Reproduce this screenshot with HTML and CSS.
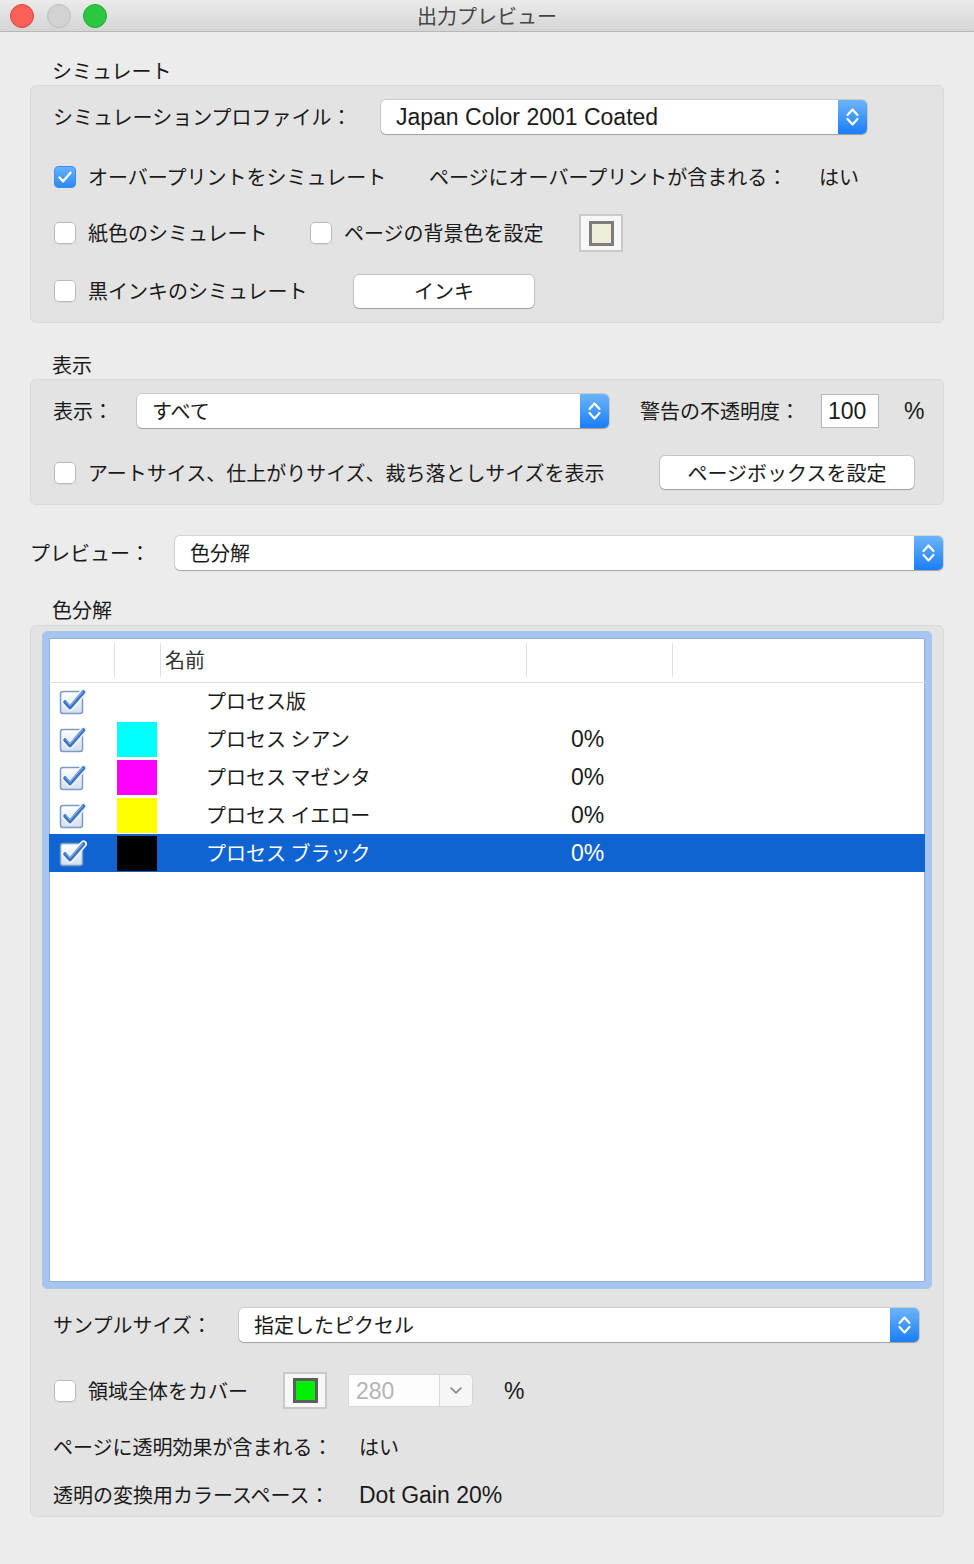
FILE: index.html
```html
<!DOCTYPE html>
<html lang="ja">
<head>
  <meta charset="UTF-8">
  <title>出力プレビュー</title>
  <link rel="stylesheet" href="styles.css">
</head>
<body>
  <svg class="defs" width="0" height="0">
    <defs>
      <linearGradient id="boxfill" x1="0" y1="0" x2="0" y2="1">
        <stop offset="0" stop-color="#ffffff"/>
        <stop offset="1" stop-color="#d3deee"/>
      </linearGradient>
      <symbol id="chev" viewBox="0 0 29 34">
        <path d="M9.5 15 L14.5 9.5 L19.5 15 M9.5 19 L14.5 24.5 L19.5 19" fill="none" stroke="#fff" stroke-width="2.2" stroke-linecap="round" stroke-linejoin="round"/>
      </symbol>
      <symbol id="tick" viewBox="0 0 28 28">
        <rect x="1.5" y="4.5" width="22" height="22" rx="2.5" fill="url(#boxfill)" stroke="#7e9bc4" stroke-width="1.5"/>
        <path d="M6 15 L11 20.5 L24.5 5" fill="none" stroke="#eef4fb" stroke-width="7" stroke-linecap="round" stroke-linejoin="round"/>
        <path d="M6 15 L11 20.5 L24.5 5" fill="none" stroke="#3d74c2" stroke-width="3.6" stroke-linecap="round" stroke-linejoin="round"/>
        <path d="M7 14.5 L11 18.8 L23.5 5" fill="none" stroke="#8fb6e8" stroke-width="1.1" stroke-linecap="round"/>
      </symbol>
      <symbol id="ok" viewBox="0 0 22 22">
        <path d="M5.5 11.5 L9.2 15.3 L16.5 6.8" fill="none" stroke="#fff" stroke-width="2.4" stroke-linecap="round" stroke-linejoin="round"/>
      </symbol>
    </defs>
  </svg>

  <div class="titlebar">
    <div class="lights">
      <span class="light red"></span>
      <span class="light off"></span>
      <span class="light green"></span>
    </div>
    <div class="title">出力プレビュー</div>
    <div></div>
  </div>

  <main class="content">
    <div class="group-title first">シミュレート</div>
    <section class="group sim">
      <div class="row r1">
        <span class="prof-label">シミュレーションプロファイル：</span>
        <div class="popup prof">
          <span class="value en">Japan Color 2001 Coated</span>
          <span class="arrows"><svg><use href="#chev"/></svg></span>
        </div>
      </div>
      <div class="row r2">
        <label class="check overprint"><span class="cb on"><svg><use href="#ok"/></svg></span>オーバープリントをシミュレート</label>
        <span class="op-label">ページにオーバープリントが含まれる：</span>
        <span>はい</span>
      </div>
      <div class="row r3">
        <label class="check paper"><span class="cb"></span>紙色のシミュレート</label>
        <label class="check bg"><span class="cb"></span>ページの背景色を設定</label>
        <span class="well"><span class="chip cream"></span></span>
      </div>
      <div class="row r4">
        <label class="check black"><span class="cb"></span>黒インキのシミュレート</label>
        <button class="btn ink">インキ</button>
      </div>
    </section>

    <div class="group-title">表示</div>
    <section class="group view">
      <div class="row r1">
        <span class="view-label">表示：</span>
        <div class="popup show">
          <span class="value">すべて</span>
          <span class="arrows"><svg><use href="#chev"/></svg></span>
        </div>
        <span class="warn-label">警告の不透明度：</span>
        <span class="field en">100</span>
        <span class="pct en">%</span>
      </div>
      <div class="row r2">
        <label class="check sizes"><span class="cb"></span>アートサイス、仕上がりサイズ、裁ち落としサイズを表示</label>
        <button class="btn pagebox">ページボックスを設定</button>
      </div>
    </section>

    <div class="row preview-row">
      <span class="preview-label">プレビュー：</span>
      <div class="popup preview">
        <span class="value">色分解</span>
        <span class="arrows"><svg><use href="#chev"/></svg></span>
      </div>
    </div>

    <div class="group-title sep-title">色分解</div>
    <section class="group sep">
      <div class="list">
        <table>
          <colgroup>
            <col class="w-chk"><col class="w-sw"><col class="w-name"><col class="w-pct"><col>
          </colgroup>
          <thead>
            <tr><th></th><th></th><th>名前</th><th></th><th></th></tr>
          </thead>
          <tbody>
            <tr>
              <td class="chk"><svg class="tick"><use href="#tick"/></svg></td>
              <td></td>
              <td class="name">プロセス版</td>
              <td></td><td></td>
            </tr>
            <tr>
              <td class="chk"><svg class="tick"><use href="#tick"/></svg></td>
              <td><span class="swatch cyan"></span></td>
              <td class="name">プロセス シアン</td>
              <td class="num en">0%</td><td></td>
            </tr>
            <tr>
              <td class="chk"><svg class="tick"><use href="#tick"/></svg></td>
              <td><span class="swatch magenta"></span></td>
              <td class="name">プロセス マゼンタ</td>
              <td class="num en">0%</td><td></td>
            </tr>
            <tr>
              <td class="chk"><svg class="tick"><use href="#tick"/></svg></td>
              <td><span class="swatch yellow"></span></td>
              <td class="name">プロセス イエロー</td>
              <td class="num en">0%</td><td></td>
            </tr>
            <tr class="sel">
              <td class="chk"><svg class="tick"><use href="#tick"/></svg></td>
              <td><span class="swatch black"></span></td>
              <td class="name">プロセス ブラック</td>
              <td class="num en">0%</td><td></td>
            </tr>
          </tbody>
        </table>
      </div>

      <div class="row sample-row">
        <span class="sample-label">サンプルサイズ：</span>
        <div class="popup sample">
          <span class="value">指定したピクセル</span>
          <span class="arrows"><svg><use href="#chev"/></svg></span>
        </div>
      </div>
      <div class="row cover-row">
        <label class="check cover"><span class="cb"></span>領域全体をカバー</label>
        <span class="well green-well"><span class="chip green"></span></span>
        <span class="combo">
          <span class="combo-text en">280</span>
          <span class="combo-drop">
            <svg viewBox="0 0 33 31"><path d="M11.5 13 L16.5 18 L21.5 13" fill="none" stroke="#8a8a8a" stroke-width="1.8" stroke-linecap="round" stroke-linejoin="round"/></svg>
          </span>
        </span>
        <span class="pct2 en">%</span>
      </div>
      <div class="row info-row">
        <span class="info-label">ページに透明効果が含まれる：</span>
        <span>はい</span>
      </div>
      <div class="row info-row last">
        <span class="info-label">透明の変換用カラースペース：</span>
        <span class="en">Dot Gain 20%</span>
      </div>
    </section>
  </main>
</body>
</html>
```

FILE: styles.css
```css
* {
  box-sizing: border-box;
}
body {
  margin: 0;
  width: 974px;
  height: 1564px;
  overflow: hidden;
  background: #ececec;
  color: #1a1a1a;
  font-family: "Noto Sans CJK JP", sans-serif;
  font-size: 20px;
  line-height: 24px;
}
.defs {
  display: block;
  width: 0;
  height: 0;
  overflow: hidden;
}
.en {
  font-family: "Liberation Sans", "Noto Sans CJK JP", sans-serif;
  font-size: 23px;
}

/* title bar */
.titlebar {
  height: 32px;
  display: grid;
  grid-template-columns: 1fr auto 1fr;
  align-items: center;
  background: linear-gradient(#ebebeb, #d5d5d5);
  border-bottom: 1px solid #b8b8b8;
}
.lights {
  display: flex;
  gap: 12.5px;
  padding-left: 10px;
}
.light {
  width: 24px;
  height: 24px;
  border-radius: 50%;
}
.light.red {
  background: #fc5f57;
  border: 1px solid #e0443e;
}
.light.off {
  background: #d2d2d2;
  border: 1px solid #bdbdbd;
}
.light.green {
  background: #2ac840;
  border: 1px solid #1eaa31;
}
.title {
  color: #444;
  font-size: 20px;
}

/* layout */
.content {
  padding: 0 30px;
}
.group-title {
  height: 24px;
  padding-left: 22px;
  margin-top: 30px;
  margin-bottom: 2px;
}
.group-title.first {
  margin-top: 27px;
}
.group-title.sep-title {
  margin-top: 28px;
  margin-bottom: 3px;
}
.group {
  background: #e3e3e3;
  border: 1px solid #d9d9d9;
  border-radius: 6px;
  padding: 14px 0 14px 22px;
}
.row {
  display: flex;
  align-items: center;
  white-space: nowrap;
}

/* simulate group */
.sim .r1 { height: 34px; }
.sim .r2 { height: 34px; margin-top: 26px; }
.sim .r3 { height: 38px; margin-top: 20px; }
.sim .r4 { height: 34px; margin-top: 22px; }
.prof-label { width: 328px; }
.popup.prof { width: 486px; }
.check.overprint { width: 376px; }
.op-label { width: 390px; }
.check.paper { width: 256px; }
.check.bg { width: 270px; }
.check.black { width: 301px; }
.btn.ink { width: 180px; }

/* view group */
.view { padding-bottom: 15px; }
.view .r1 { height: 34px; }
.view .r2 { height: 33px; margin-top: 28px; }
.view-label { width: 84px; }
.popup.show { width: 472px; }
.warn-label {
  width: 181px;
  margin-left: 31px;
}
.check.sizes { width: 607px; }
.btn.pagebox { width: 254px; }
.pct { margin-left: 25px; }

.preview-row {
  height: 34px;
  margin-top: 31px;
}
.preview-label { width: 145px; }
.popup.preview { width: 768px; }

/* controls */
.check {
  display: flex;
  align-items: center;
  gap: 12px;
  flex-shrink: 0;
}
.cb {
  width: 22px;
  height: 22px;
  margin-left: 1px;
  border-radius: 5px;
  background: #fff;
  box-shadow: inset 0 0 0 1px #bababa, 0 1px 1px rgba(0, 0, 0, 0.06);
  flex-shrink: 0;
}
.cb.on {
  background: linear-gradient(#6ab3fb, #2a88f6);
  box-shadow: inset 0 0 0 1px #3b8fe8;
}
.cb svg {
  display: block;
  width: 22px;
  height: 22px;
}
.popup {
  display: flex;
  height: 34px;
  background: #fff;
  border-radius: 5px;
  box-shadow: 0 0 0 1px rgba(0, 0, 0, 0.1), 0 1px 1px rgba(0, 0, 0, 0.22);
  overflow: hidden;
  flex-shrink: 0;
}
.popup .value {
  flex: 1;
  display: flex;
  align-items: center;
  padding-left: 15px;
}
.popup .arrows {
  width: 29px;
  background: linear-gradient(#6cb4fb, #1a7ef6);
}
.popup .arrows svg {
  display: block;
  width: 29px;
  height: 34px;
}
.btn {
  height: 33px;
  padding: 0;
  border: none;
  border-radius: 5px;
  background: #fff;
  box-shadow: 0 0 0 1px rgba(0, 0, 0, 0.13), 0 1px 1px rgba(0, 0, 0, 0.2);
  font: inherit;
  color: inherit;
  flex-shrink: 0;
}
.well {
  width: 44px;
  height: 38px;
  display: flex;
  align-items: center;
  justify-content: center;
  background: #f7f7f7;
  border: 2px solid #c9c9c9;
  flex-shrink: 0;
}
.chip {
  width: 25px;
  height: 25px;
  border: 3px solid #7d7d7d;
}
.chip.cream { background: #efeedb; }
.chip.green { background: #00ee00; border-color: #5e5e5e; }
.field {
  width: 58px;
  height: 34px;
  display: flex;
  align-items: center;
  padding-left: 6px;
  background: #fff;
  border: 1px solid #b7b7b7;
}

/* separations group */
.sep {
  padding: 5px 11px 6px;
}
.sep .row {
  padding-left: 11px;
}
.list {
  height: 658px;
  border: 7px solid #a7c5ee;
  border-radius: 5px;
  background: #fff;
  box-shadow: inset 0 0 0 1px #8fb1e2;
}
.list table {
  width: 100%;
  border-collapse: collapse;
  table-layout: fixed;
}
.w-chk { width: 65px; }
.w-sw { width: 46px; }
.w-name { width: 366px; }
.w-pct { width: 146px; }
.list th {
  height: 44px;
  padding: 0 0 0 5px;
  text-align: left;
  font-weight: normal;
  color: #333;
  border-bottom: 1px solid #dcdcdc;
}
.list th + th {
  background: linear-gradient(#dedede, #dedede) no-repeat left center / 1px 34px;
}
.list td {
  height: 38px;
  padding: 0;
}
.list td.chk {
  padding-left: 10px;
}
.tick {
  display: block;
  width: 28px;
  height: 28px;
}
.list td.name {
  padding-left: 46px;
}
.list td.num {
  padding-left: 45px;
}
.list tr.sel td {
  background: #1064d1;
  color: #fff;
}
.swatch {
  display: block;
  width: 40px;
  height: 35px;
  margin-left: 3px;
}
.swatch.cyan { background: #00ffff; }
.swatch.magenta { background: #ff00ff; }
.swatch.yellow { background: #ffff00; }
.swatch.black { background: #000; }

.sample-row {
  height: 34px;
  margin-top: 19px;
}
.sample-label { width: 186px; }
.popup.sample { width: 680px; }
.cover-row {
  height: 37px;
  margin-top: 30px;
}
.check.cover { width: 230px; }
.green-well { height: 37px; }
.combo {
  display: flex;
  height: 33px;
  margin-left: 21px;
}
.combo-text {
  width: 92px;
  display: flex;
  align-items: center;
  padding-left: 7px;
  color: #b4b4b4;
  background: #fdfdfd;
  border: 1px solid #d8d8d8;
}
.combo-drop {
  width: 33px;
  background: #f6f6f6;
  border: 1px solid #d6d6d6;
  border-left: none;
  border-radius: 0 5px 5px 0;
}
.combo-drop svg {
  display: block;
  width: 32px;
  height: 31px;
}
.pct2 { margin-left: 31px; }
.info-row {
  height: 30px;
  margin-top: 23px;
}
.info-row.last {
  margin-top: 18px;
}
.info-label { width: 306px; }
```
